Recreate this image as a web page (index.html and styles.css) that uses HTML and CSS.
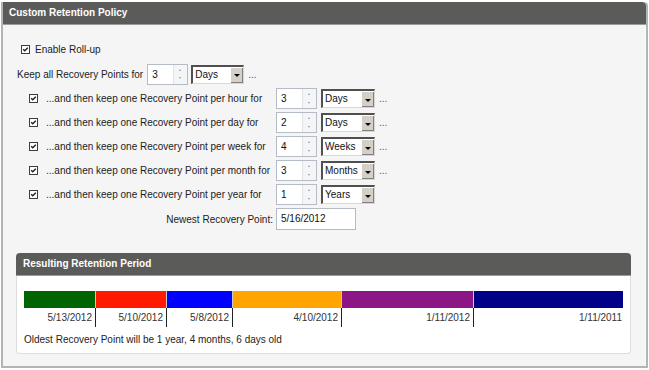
FILE: index.html
```html
<!DOCTYPE html>
<html>
<head>
<meta charset="utf-8">
<link rel="stylesheet" href="styles.css">
</head>
<body>
<div class="panel">
  <div class="panel-head">Custom Retention Policy</div>
  <div class="panel-body">
    <div class="rollup">
      <span class="cb checked"><svg viewBox="0 0 9 9" width="9" height="9"><path d="M1.5 4.2 L3.5 6.2 L7.5 2.2" fill="none" stroke="#222" stroke-width="1.8"/></svg></span>
      <span>Enable Roll-up</span>
    </div>
    <div class="keepall">
      <span class="kl">Keep all Recovery Points for</span>
      <span class="spin"><span class="val">3</span><span class="arrows"><i class="up"></i><i class="dn"></i></span></span>
      <span class="sel w1"><span class="val">Days</span><span class="btn"><i></i></span></span>
      <span class="dots">...</span>
    </div>
    <div class="rows">
      <div class="row">
        <span class="cb checked"><svg viewBox="0 0 9 9" width="9" height="9"><path d="M1.5 4.2 L3.5 6.2 L7.5 2.2" fill="none" stroke="#222" stroke-width="1.8"/></svg></span>
        <span class="lbl">...and then keep one Recovery Point per hour for</span>
        <span class="spin"><span class="val">3</span><span class="arrows"><i class="up"></i><i class="dn"></i></span></span>
        <span class="sel"><span class="val">Days</span><span class="btn"><i></i></span></span>
        <span class="dots">...</span>
      </div>
      <div class="row">
        <span class="cb checked"><svg viewBox="0 0 9 9" width="9" height="9"><path d="M1.5 4.2 L3.5 6.2 L7.5 2.2" fill="none" stroke="#222" stroke-width="1.8"/></svg></span>
        <span class="lbl">...and then keep one Recovery Point per day for</span>
        <span class="spin"><span class="val">2</span><span class="arrows"><i class="up"></i><i class="dn"></i></span></span>
        <span class="sel"><span class="val">Days</span><span class="btn"><i></i></span></span>
        <span class="dots">...</span>
      </div>
      <div class="row">
        <span class="cb checked"><svg viewBox="0 0 9 9" width="9" height="9"><path d="M1.5 4.2 L3.5 6.2 L7.5 2.2" fill="none" stroke="#222" stroke-width="1.8"/></svg></span>
        <span class="lbl">...and then keep one Recovery Point per week for</span>
        <span class="spin"><span class="val">4</span><span class="arrows"><i class="up"></i><i class="dn"></i></span></span>
        <span class="sel"><span class="val">Weeks</span><span class="btn"><i></i></span></span>
        <span class="dots">...</span>
      </div>
      <div class="row">
        <span class="cb checked"><svg viewBox="0 0 9 9" width="9" height="9"><path d="M1.5 4.2 L3.5 6.2 L7.5 2.2" fill="none" stroke="#222" stroke-width="1.8"/></svg></span>
        <span class="lbl">...and then keep one Recovery Point per month for</span>
        <span class="spin"><span class="val">3</span><span class="arrows"><i class="up"></i><i class="dn"></i></span></span>
        <span class="sel"><span class="val">Months</span><span class="btn"><i></i></span></span>
        <span class="dots">...</span>
      </div>
      <div class="row">
        <span class="cb checked"><svg viewBox="0 0 9 9" width="9" height="9"><path d="M1.5 4.2 L3.5 6.2 L7.5 2.2" fill="none" stroke="#222" stroke-width="1.8"/></svg></span>
        <span class="lbl">...and then keep one Recovery Point per year for</span>
        <span class="spin"><span class="val">1</span><span class="arrows"><i class="up"></i><i class="dn"></i></span></span>
        <span class="sel"><span class="val">Years</span><span class="btn"><i></i></span></span>
      </div>
      <div class="row newest">
        <span class="nlbl">Newest Recovery Point:</span>
        <span class="txt">5/16/2012</span>
      </div>
    </div>

    <div class="inner">
      <div class="inner-head">Resulting Retention Period</div>
      <div class="inner-body">
        <div class="bar">
          <div class="seg" style="width:72px;background:#006400"></div>
          <div class="seg" style="width:71px;background:#ff1a00"></div>
          <div class="seg" style="width:66px;background:#0000ff"></div>
          <div class="seg" style="width:109px;background:#ffa500"></div>
          <div class="seg" style="width:132px;background:#8c1686"></div>
          <div class="seg last" style="width:149px;background:#000088"></div>
        </div>
        <div class="ticks">
          <div class="tick" style="width:72px">5/13/2012</div>
          <div class="tick" style="width:71px">5/10/2012</div>
          <div class="tick" style="width:66px">5/8/2012</div>
          <div class="tick" style="width:109px">4/10/2012</div>
          <div class="tick" style="width:132px">1/11/2012</div>
          <div class="tick last" style="width:149px">1/11/2011</div>
        </div>
        <div class="oldest">Oldest Recovery Point will be 1 year, 4 months, 6 days old</div>
      </div>
    </div>
  </div>
</div>
</body>
</html>
```

FILE: styles.css
```css
html, body {
  margin: 0;
  padding: 0;
  background: #ffffff;
}
body {
  width: 649px;
  height: 370px;
  overflow: hidden;
  font-family: "Liberation Sans", Arial, sans-serif;
  font-size: 10px;
  color: #222;
}
.panel {
  margin: 2px 1px 0 1px;
  height: 366px;
  border-left: 2px solid #b4b4b4;
  border-right: 2px solid #b4b4b4;
  border-bottom: 2px solid #b4b4b4;
  border-top-right-radius: 4px;
  background: #f5f5f5;
  display: flex;
  flex-direction: column;
  box-sizing: border-box;
  width: 647px;
}
.panel-head {
  height: 22px;
  background: #5b5c59;
  border-bottom: 1px solid #9c9c9c;
  color: #fff;
  font-weight: bold;
  font-size: 10px;
  line-height: 22px;
  padding-left: 6px;
  border-top-right-radius: 4px;
  flex: none;
}
.panel-body {
  flex: 1;
  display: flex;
  flex-direction: column;
  border-right: 1px solid #fbfbfb;
}
.rollup {
  display: flex;
  align-items: center;
  margin-top: 19px;
  margin-left: 18px;
  height: 10px;
}
.rollup .cb { margin-right: 5px; }
.cb {
  display: inline-flex;
  width: 9px;
  height: 9px;
  box-sizing: border-box;
  border: 1px solid #3c3c3c;
  background: #fff;
  align-items: center;
  justify-content: center;
  flex: none;
}
.cb svg { width: 7px; height: 7px; display: block; }
.keepall {
  display: flex;
  align-items: center;
  margin-top: 9px;
  margin-left: 14px;
  height: 22px;
}
.kl { margin-right: 4px; }
.spin {
  display: inline-flex;
  width: 41px;
  height: 21px;
  box-sizing: border-box;
  border: 1px solid #b6bcc6;
  background: #fff;
  flex: none;
}
.spin .val {
  flex: 1;
  padding-left: 4px;
  line-height: 19px;
  color: #111;
}
.arrows {
  width: 13px;
  display: flex;
  flex-direction: column;
  border-left: 1px solid #e2e4e8;
  background: #f4f5f7;
}
.arrows i {
  flex: 1;
  position: relative;
}
.arrows i::after {
  content: "";
  position: absolute;
  left: 5px;
  width: 0;
  height: 0;
  border-left: 1.5px solid transparent;
  border-right: 1.5px solid transparent;
}
.arrows i.up::after { top: 4px; border-bottom: 2px solid #9a9a9a; }
.arrows i.dn::after { top: 3px; border-top: 2px solid #9a9a9a; }
.sel {
  display: inline-flex;
  width: 54px;
  height: 19px;
  box-sizing: border-box;
  border-top: 2px solid #505050;
  border-left: 2px solid #505050;
  border-right: 1px solid #d8d8d8;
  border-bottom: 1px solid #d8d8d8;
  background: #fff;
  margin-left: 4px;
  flex: none;
}
.sel.w1 { width: 53px; margin-left: 3px; }
.sel .val {
  flex: 1;
  padding-left: 2px;
  line-height: 16px;
  color: #111;
  overflow: hidden;
  white-space: nowrap;
}
.sel .btn {
  width: 12px;
  background: #d4d0c8;
  border-left: 1px solid #fff;
  border-top: 1px solid #fff;
  box-shadow: inset -1px -1px 0 #808080;
  display: flex;
  align-items: center;
  justify-content: center;
}
.sel .btn i {
  width: 0;
  height: 0;
  border-left: 3px solid transparent;
  border-right: 3px solid transparent;
  border-top: 3px solid #000;
  margin-top: 1px;
}
.dots {
  margin-left: 4px;
  color: #555;
}
.rows {
  margin-left: 26px;
  margin-top: 3px;
  display: flex;
  flex-direction: column;
  gap: 3px;
}
.row {
  display: flex;
  align-items: center;
  height: 21px;
}
.row .cb { margin-right: 8px; }
.lbl {
  width: 230px;
  flex: none;
  white-space: nowrap;
}
.row.newest {
  height: 22px;
  margin-top: 0;
}
.nlbl {
  width: 247px;
  text-align: right;
  padding-right: 3px;
  box-sizing: border-box;
  flex: none;
}
.txt {
  width: 80px;
  height: 22px;
  box-sizing: border-box;
  border: 1px solid #b6bcc6;
  background: #fff;
  padding-left: 4px;
  line-height: 20px;
  color: #111;
}
.inner {
  margin: 23px 14px 0 13px;
  height: 101px;
  display: flex;
  flex-direction: column;
  border-radius: 4px;
  background: #fff;
  border: 1px solid #dedede;
  border-top: none;
  box-sizing: border-box;
}
.inner-head {
  height: 22px;
  background: #5b5c59;
  border-bottom: 1px solid #9c9c9c;
  border-radius: 4px 4px 0 0;
  color: #fff;
  font-weight: bold;
  line-height: 22px;
  padding-left: 7px;
  margin: 0 -1px;
  flex: none;
}
.inner-body {
  padding: 15px 0 0 7px;
}
.bar {
  display: flex;
  height: 17px;
}
.seg {
  height: 17px;
  box-sizing: border-box;
  border-right: 1px solid #c8c8c8;
}
.seg.last { border-right: none; }
.ticks {
  display: flex;
  height: 19px;
}
.tick {
  box-sizing: border-box;
  border-right: 1px solid #222;
  text-align: right;
  padding-right: 3px;
  padding-top: 4px;
  line-height: 11px;
  color: #333;
}
.tick.last { border-right: none; padding-right: 1px; }
.oldest {
  margin-top: 7px;
  color: #222;
}
```
